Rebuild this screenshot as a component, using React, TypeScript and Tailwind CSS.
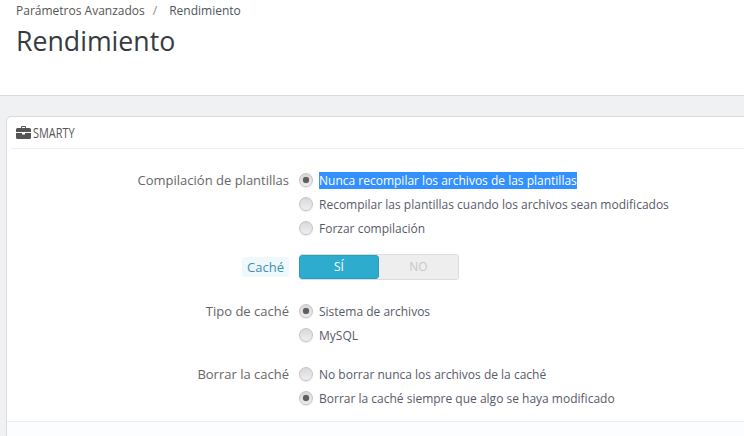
const font = { fontFamily: '"Open Sans", sans-serif' };

function Radio({ checked }: { checked?: boolean }) {
  return (
    <span className="flex h-[14px] w-[14px] shrink-0 items-center justify-center rounded-full border border-[#c4c4c4] bg-gradient-to-b from-[#d8d8d8] to-[#efefef] shadow-[0_1px_1px_rgba(0,0,0,0.1)]">
      {checked && <span className="h-[6px] w-[6px] rounded-full bg-[#5f5f5f] shadow-[0_0_1px_#777]" />}
    </span>
  );
}

function Option({ label, checked, selected }: { label: string; checked?: boolean; selected?: boolean }) {
  return (
    <div className="flex h-[24px] items-center">
      <Radio checked={checked} />
      <span className={selected ? "ml-[6px] bg-[#3390ff] leading-[17px] text-white" : "ml-[6px] leading-[17px] text-[#585a69]"}>
        {label}
      </span>
    </div>
  );
}

function Row({ label, options, className }: { label: string; options: { label: string; checked?: boolean; selected?: boolean }[]; className?: string }) {
  return (
    <div className={"flex " + (className ?? "")}>
      <div className="flex h-[24px] w-[282px] shrink-0 items-center justify-end pt-[1px] text-[13px] text-[#666]">{label}</div>
      <div className="ml-[10px] flex flex-col">
        {options.map((o) => (
          <Option key={o.label} {...o} />
        ))}
      </div>
    </div>
  );
}

export default function App() {
  return (
    <div className="flex h-[436px] w-[744px] flex-col overflow-hidden bg-[#eff1f2] text-[12px]" style={font}>
      <header className="h-[96px] shrink-0 border-b border-[#d9dbdc] bg-white pl-[16px]">
        <div className="flex h-[20px] items-center pt-[1px] text-[12px] text-[#555]">
          <span>Parámetros Avanzados</span>
          <span className="ml-[8px] text-[#888]">/</span>
          <span className="ml-[12px] text-[#4a5560]">Rendimiento</span>
        </div>
        <h1 className="mt-[3px] text-[26.7px] leading-[36px] text-[#363a41]">Rendimiento</h1>
      </header>
      <main className="min-h-0 flex-1 pl-[6px] pt-[20px]">
        <section className="h-[320px] w-[760px] rounded-tl-[5px] border border-[#d9dbdc] bg-white">
          <div className="mx-[4px] flex h-[32px] items-center gap-[2px] border-b border-[#eeeeee] pl-[5px]">
            <svg width="15" height="13" viewBox="0 0 15 13" className="shrink-0">
              <path fill="#555" d="M5 2V1a1 1 0 0 1 1-1h3a1 1 0 0 1 1 1v1h3.5A1.5 1.5 0 0 1 15 3.5V6H0V3.5A1.5 1.5 0 0 1 1.5 2H5zm1 0h3V1H6v1zM0 7h6v1.5h3V7h6v4.5a1.5 1.5 0 0 1-1.5 1.5h-12A1.5 1.5 0 0 1 0 11.5V7z" />
            </svg>
            <span className="inline-block origin-left scale-x-[0.73] text-[15px] whitespace-nowrap text-[#555]">SMARTY</span>
          </div>
          <div className="pt-[19px]">
            <Row
              label="Compilación de plantillas"
              options={[
                { label: "Nunca recompilar los archivos de las plantillas", checked: true, selected: true },
                { label: "Recompilar las plantillas cuando los archivos sean modificados" },
                { label: "Forzar compilación" },
              ]}
            />
            <div className="mt-[14px] flex h-[26px] items-center">
              <div className="flex w-[282px] shrink-0 justify-end">
                <span className="rounded-[3px] bg-[#eff8fc] px-[5px] text-[13px] leading-[20px] text-[#3f8fb3]">Caché</span>
              </div>
              <div className="ml-[10px] flex h-[26px] w-[160px] overflow-hidden rounded-[3px] border border-l-0 border-[#dcdcdc]">
                <span className="flex w-[80px] items-center justify-center rounded-[3px] border border-[#2a9cbd] bg-[#2eacce] font-medium text-white">SÍ</span>
                <span className="flex flex-1 items-center justify-center bg-[#eeeeee] font-medium text-[#c8c8c8]">NO</span>
              </div>
            </div>
            <Row
              className="mt-[19px]"
              label="Tipo de caché"
              options={[{ label: "Sistema de archivos", checked: true }, { label: "MySQL" }]}
            />
            <Row
              className="mt-[15px]"
              label="Borrar la caché"
              options={[
                { label: "No borrar nunca los archivos de la caché" },
                { label: "Borrar la caché siempre que algo se haya modificado", checked: true },
              ]}
            />
          </div>
          <div className="mt-[11px] h-[20px] border-t border-[#eeeeee] bg-[#fcfdfe]" />
        </section>
      </main>
    </div>
  );
}
